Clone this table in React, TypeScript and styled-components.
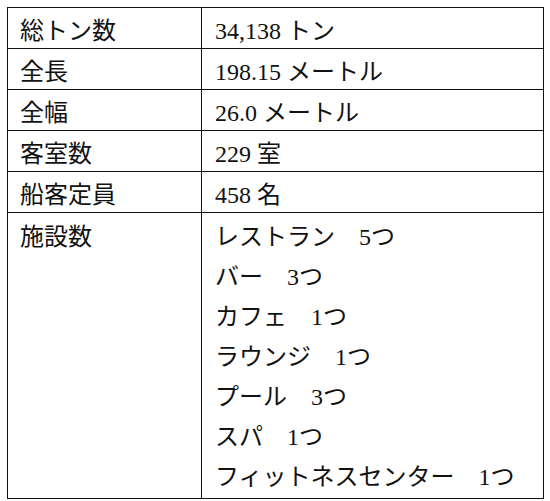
import React from "react";
import styled, { createGlobalStyle } from "styled-components";

const GlobalStyle = createGlobalStyle`
  html, body {
    margin: 0;
    padding: 0;
    background: #fff;
  }
  body {
    font-family: "Liberation Serif", "Noto Sans CJK JP", serif;
    color: #111;
  }
`;

const Page = styled.div`
  padding: 7px 0 0 7px;
`;

const Table = styled.table`
  border-collapse: collapse;
  width: 537px;
  font-size: 24px;
  table-layout: fixed;
`;

const Cell = styled.td<{ $wide?: boolean }>`
  border: 1.5px solid #111;
  height: 41px;
  padding: 0 0 0 ${(p) => (p.$wide ? 13 : 12)}px;
  vertical-align: middle;
  width: ${(p) => (p.$wide ? "auto" : "194px")};
  box-sizing: border-box;
  white-space: nowrap;
`;

const TopCell = styled(Cell)`
  vertical-align: top;
  padding-top: 4px;
  padding-bottom: 1px;
`;

const Line = styled.div`
  line-height: 40px;
  height: 40px;
`;

type Row = { label: string; value: string };

const ROWS: Row[] = [
  { label: "総トン数", value: "34,138 トン" },
  { label: "全長", value: "198.15 メートル" },
  { label: "全幅", value: "26.0 メートル" },
  { label: "客室数", value: "229 室" },
  { label: "船客定員", value: "458 名" },
];

const FACILITIES = [
  "レストラン　5つ",
  "バー　3つ",
  "カフェ　1つ",
  "ラウンジ　1つ",
  "プール　3つ",
  "スパ　1つ",
  "フィットネスセンター　1つ",
];

export default function App() {
  return (
    <>
      <GlobalStyle />
      <Page>
        <Table>
          <tbody>
            {ROWS.map((r) => (
              <tr key={r.label}>
                <Cell>{r.label}</Cell>
                <Cell $wide>{r.value}</Cell>
              </tr>
            ))}
            <tr>
              <TopCell>施設数</TopCell>
              <TopCell $wide>
                {FACILITIES.map((f) => (
                  <Line key={f}>{f}</Line>
                ))}
              </TopCell>
            </tr>
          </tbody>
        </Table>
      </Page>
    </>
  );
}
